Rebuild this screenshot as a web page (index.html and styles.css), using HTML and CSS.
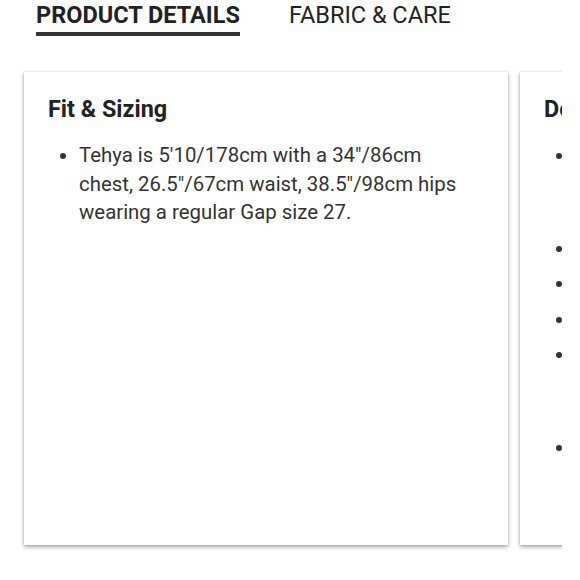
FILE: index.html
```html
<!DOCTYPE html>
<html>
<head>
<meta charset="utf-8">
<link rel="stylesheet" href="styles.css">
</head>
<body>
<nav class="tabs">
  <div class="tab active">PRODUCT DETAILS</div>
  <div class="tab">FABRIC &amp; CARE</div>
</nav>
<div class="viewport">
  <div class="cards">
    <section class="card">
      <h2 class="card-title">Fit &amp; Sizing</h2>
      <ul class="list">
        <li>Tehya is 5'10/178cm with a 34"/86cm chest, 26.5"/67cm waist, 38.5"/98cm hips wearing a regular Gap size 27.</li>
      </ul>
    </section>
    <section class="card">
      <h2 class="card-title">Details</h2>
      <ul class="list">
        <li>Made with organic cotton grown without the use of harmful chemicals, for a softer feel and a lighter footprint.</li>
        <li>Button closure.</li>
        <li>Belt loops.</li>
        <li>Five-pocket styling.</li>
        <li>Softly faded wash with whiskering, fading and subtle distressing throughout for a lived-in look.</li>
        <li>#123456</li>
      </ul>
    </section>
  </div>
</div>
</body>
</html>
```
FILE: styles.css
```css
body {
  margin: 0;
  background: #fff;
  font-family: Roboto, "Liberation Sans", sans-serif;
  color: #333;
}
.tabs {
  display: flex;
  gap: 49px;
  padding-left: 36px;
  height: 36px;
}
.tab {
  font-size: 23.5px;
  line-height: 30px;
  color: #222;
}
.tab.active {
  font-weight: 700;
  border-bottom: 4px solid #333;
  height: 32px;
}
.viewport {
  width: 562px;
  overflow: hidden;
  padding-top: 36px;
}
.cards {
  display: flex;
  gap: 12px;
  padding: 0 0 12px 24px;
}
.card {
  flex: 0 0 484px;
  height: 473px;
  box-sizing: border-box;
  background: #fff;
  box-shadow: 0 2px 4px rgba(0,0,0,0.35), 0 0 3px rgba(0,0,0,0.12);
  padding: 22px 40px 22px 24px;
}
.card-title {
  margin: 0;
  font-size: 23.4px;
  line-height: 30px;
  font-weight: 700;
  color: #222;
}
.list {
  margin: 17px 0 0;
  padding-left: 31px;
  font-size: 20.4px;
  line-height: 28.5px;
}
.list li {
  margin-bottom: 7px;
}
```
